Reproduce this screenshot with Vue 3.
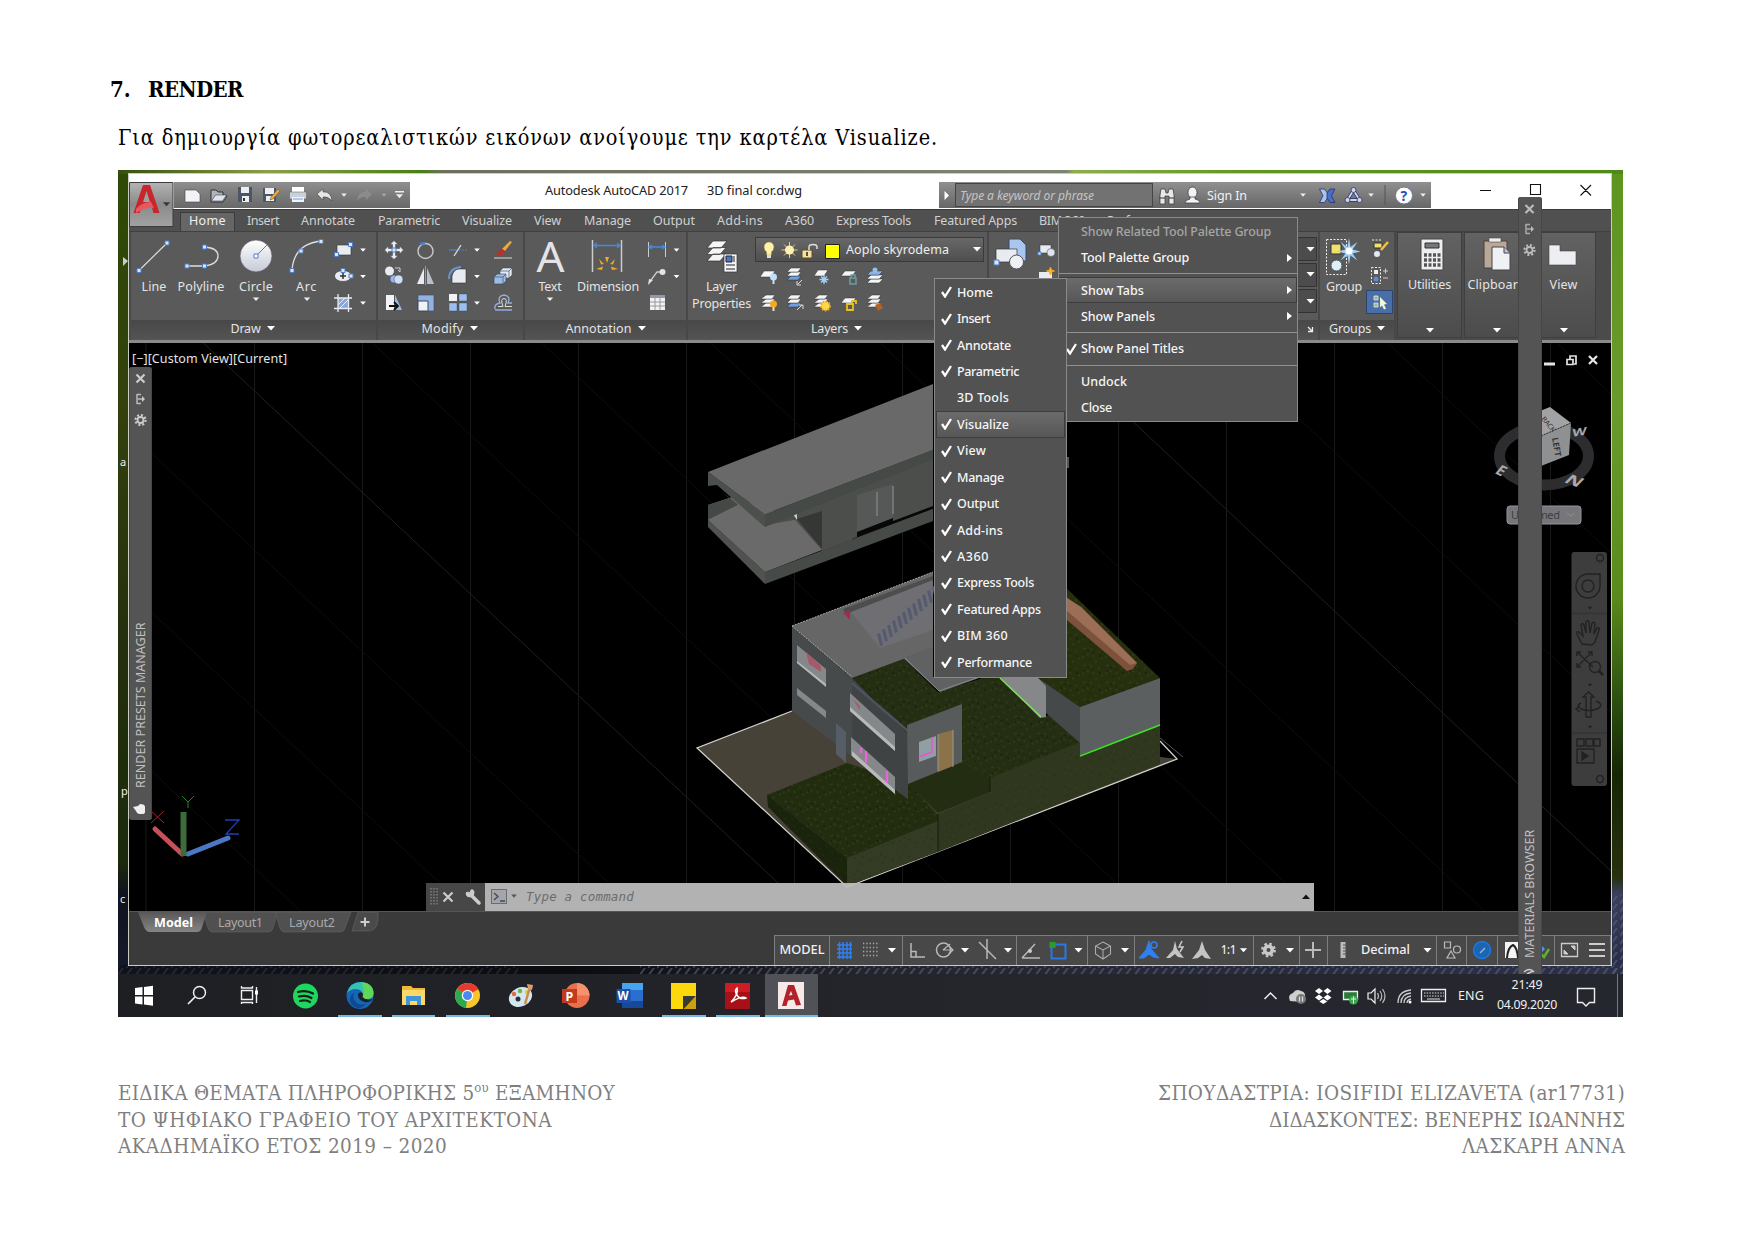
<script setup>
// Spreads the glyphs of a label so it occupies exactly the given width
const vFit = {
  mounted(el, { value }) {
    const w = el.getBoundingClientRect().width
    const n = el.textContent.length
    el.style.letterSpacing = (value - w) / n + 'px'
  },
}

const dn = (x, y, s = 1) => `M${x - 4 * s} ${y - 2 * s}h${8 * s}l${-4 * s} ${4.6 * s}z`

// label, left offset from previous tab end, text width
const tabs = [
  ['Home', 9, 37], ['Insert', 21, 32], ['Annotate', 22, 54], ['Parametric', 23, 62],
  ['Visualize', 22, 50], ['View', 22, 27], ['Manage', 23, 47], ['Output', 22, 42],
  ['Add-ins', 22, 46], ['A360', 22, 29], ['Express Tools', 22, 75], ['Featured Apps', 23, 83],
  ['BIM 360', 22, 46], ['Performance', 22, 72],
]

const tabMenu = [
  ['Home', 1, 36], ['Insert', 1, 33], ['Annotate', 1, 54], ['Parametric', 1, 62], ['3D Tools', 0, 52],
  ['Visualize', 1, 52], ['View', 1, 29], ['Manage', 1, 47], ['Output', 1, 42], ['Add-ins', 1, 46],
  ['A360', 1, 32], ['Express Tools', 1, 77], ['Featured Apps', 1, 84], ['BIM 360', 1, 51], ['Performance', 1, 75],
]

const gridX = [146, 254.5, 362.5, 470.5, 578.5, 686.5, 794.5, 902.5, 1010.5, 1118.5, 1226.5, 1334.5, 1442.5, 1550.5]
const diagonals = Array.from({ length: 15 }, (_, i) => ({ c: 788 - i * 159, bright: (i + 1) % 5 === 0 }))
const stairs = Array.from({ length: 12 }, (_, i) => ({ x: 877 + i * 5, y: 634 - i * 4.3 }))
const carets = [[363, 250], [363, 276.5], [363, 303]]
</script>

<template>
  <div class="page">
    <h1><span class="num">7.</span><span v-fit="95">RENDER</span></h1>
    <p class="lead"><span v-fit="820">Για δημιουργία φωτορεαλιστικών εικόνων ανοίγουμε την καρτέλα Visualize.</span></p>

    <div class="shot">
      <svg class="desk" viewBox="118 170 1505 804" width="1505" height="804">
        <defs>
          <linearGradient id="dl" x1="0" y1="0" x2="0" y2="1">
            <stop offset="0" stop-color="#2f4a06" /><stop offset=".3" stop-color="#33400d" />
            <stop offset=".6" stop-color="#232f0d" /><stop offset=".86" stop-color="#1c2a0c" />
            <stop offset=".9" stop-color="#10131f" /><stop offset="1" stop-color="#151a2b" />
          </linearGradient>
          <linearGradient id="dr" x1="0" y1="0" x2="0" y2="1">
            <stop offset="0" stop-color="#5e9420" /><stop offset=".3" stop-color="#6a9a2c" /><stop offset=".53" stop-color="#5b8a1c" />
            <stop offset=".66" stop-color="#2c5010" /><stop offset=".75" stop-color="#152605" /><stop offset=".88" stop-color="#27300f" />
            <stop offset=".9" stop-color="#3a405c" /><stop offset="1" stop-color="#262b45" />
          </linearGradient>
          <linearGradient id="dt" x1="0" x2="1">
            <stop offset="0" stop-color="#35500a" /><stop offset=".1" stop-color="#8aa04a" /><stop offset=".2" stop-color="#4a8012" />
            <stop offset=".215" stop-color="#6a705c" /><stop offset=".63" stop-color="#7e8474" /><stop offset=".635" stop-color="#8cae4c" />
            <stop offset=".75" stop-color="#5f9720" /><stop offset="1" stop-color="#4f8a18" />
          </linearGradient>
          <linearGradient id="db" x1="0" x2="1">
            <stop offset="0" stop-color="#11131c" /><stop offset=".3" stop-color="#0b0c10" /><stop offset=".5" stop-color="#23242d" />
            <stop offset="1" stop-color="#2c3049" />
          </linearGradient>
          <pattern id="hatch" width="9" height="8" patternUnits="userSpaceOnUse">
            <path d="M0 8 6 0" stroke="#5c6078" stroke-width="2" />
          </pattern>
        </defs>
        <rect x="118" y="170" width="12" height="804" fill="url(#dl)" />
        <rect x="1610" y="170" width="13" height="804" fill="url(#dr)" />
        <rect x="118" y="170" width="1505" height="4" fill="url(#dt)" />
        <rect x="118" y="965" width="1505" height="9" fill="url(#db)" />
        <rect x="118" y="966" width="400" height="8" fill="url(#hatch)" opacity=".25" />
        <rect x="640" y="966" width="983" height="8" fill="url(#hatch)" opacity=".6" />
        <rect x="1613" y="895" width="10" height="79" fill="url(#hatch)" opacity=".6" />
        <g fill="#eee" font-size="11" font-family="Noto Sans, sans-serif">
          <text x="120" y="466">a</text><text x="121" y="795">p</text><text x="120" y="903">c</text>
        </g>
        <path d="M123 257l5 4-5 5z" fill="#ccc" />
      </svg>

      <div class="window">
        <!-- title bar -->
        <div class="titlebar">
          <div class="quick">
            <svg viewBox="174 182 236 26" width="236" height="26">
              <path d="M185 190h11l4 4v8h-15z" fill="#f2f3f6" stroke="#444" stroke-width=".6" />
              <path d="M211 201v-11h5l2 2h5v3l4 1-4 6h-12z" fill="#aeb4bd" stroke="#333" /><path d="M211.500 201l4-6h11l-4 6z" fill="#dfe5ee" stroke="#444" stroke-width=".6" />
              <path d="M238 187h14v15h-14z" fill="#4c5666" /><path d="M241 187h8v6h-8zM242 196h7v6h-7z" fill="#eceff3" /><path d="M243 198h2v3h-2z" fill="#333" />
              <path d="M263 188h13v14h-13z" fill="#4c5666" /><path d="M265 188h9v6h-9zM266 196h8v5h-8z" fill="#eceff3" /><path d="M271 197l7-8 2 2-7 8-3 1z" fill="#e6ae45" stroke="#6a4415" stroke-width=".5" />
              <path d="M292 187h12v6h-12z" fill="#fff" /><path d="M289.500 192h17v7h-17z" fill="#c9d0da" stroke="#555" stroke-width=".5" /><path d="M292 197h12v5h-12z" fill="#eef4fb" /><path d="M293 199h10" stroke="#6b9ed6" />
              <path d="M317 194l6-5v3q8-1 9 9-4-5-9-4v3z" fill="#e6e6e6" stroke="#333" stroke-width=".5" />
              <path :d="dn(344, 195, .7)" fill="#eee" />
              <path d="M372 194l-6-5v3q-8-1-9 9 4-5 9-4v3z" fill="#8c8c8c" />
              <path :d="dn(384, 195, .6)" fill="#aaa" />
              <path d="M395 191h9v1.500h-9z" fill="#eee" /><path :d="dn(399.500, 196, .9)" fill="#eee" />
            </svg>
          </div>
          <div class="caption"><span v-fit="143">Autodesk AutoCAD 2017</span><span class="file" v-fit="95">3D final cor.dwg</span></div>
          <div class="info">
            <svg viewBox="939 182 16 26" width="16" height="26"><path d="M944.500 191v9l4.500-4.500z" fill="#fff" /></svg>
            <div class="search"><span v-fit="134">Type a keyword or phrase</span></div>
            <svg viewBox="1153 182 50 26" width="50" height="26">
              <path d="M1160 204v-9l1-6h4l1 4h2l1-4h4l1 6v9h-5v-8h-4v8z" fill="#e6e7ea" stroke="#333" stroke-width=".7" /><path d="M1159.500 198h5.500M1169 198h5" stroke="#333" stroke-width="1.200" />
              <ellipse cx="1192.500" cy="192.500" rx="4.500" ry="5.500" fill="#f1f3f7" stroke="#333" stroke-width=".7" /><path d="M1185 203q0-3 5-4v-2h5v2q5 1 5 4z" fill="#f1f3f7" stroke="#333" stroke-width=".7" />
            </svg>
            <span class="signin"><span v-fit="40">Sign In</span></span>
            <svg class="grow" viewBox="1290 182 141 26" width="141" height="26">
              <path :d="dn(1303, 195, .7)" fill="#eee" />
              <path d="M1319.500 189h5l3 4v5l-3 4.500h-5l3.500-6.700z" fill="#a9c3f0" stroke="#22346e" stroke-width=".8" /><path d="M1335 189h-5l-3 4v5l3 4.500h5l-3.500-6.700z" fill="#4a6ec4" stroke="#22346e" stroke-width=".8" />
              <path d="M1353.500 190l-6 10h12z" fill="none" stroke="#2b3566" stroke-width="3.400" stroke-linejoin="round" /><path d="M1353.500 190l-6 10h12z" fill="none" stroke="#cdd8f0" stroke-width="1.800" stroke-linejoin="round" />
              <g fill="#cdd8f0" stroke="#2b3566" stroke-width=".8"><circle cx="1353.500" cy="190" r="2.500" /><circle cx="1347.500" cy="200" r="2.500" /><circle cx="1359.500" cy="200" r="2.500" /></g>
              <path :d="dn(1371, 195, .7)" fill="#eee" />
              <path d="M1385 185v20" stroke="#555" />
              <circle cx="1404" cy="195.500" r="8.500" fill="#fff" stroke="#6c7a99" /><text x="1400.500" y="200.500" font-size="14" font-weight="700" fill="#2b4fb0">?</text>
              <path :d="dn(1423, 195, .7)" fill="#eee" />
            </svg>
          </div>
          <svg class="wbtn" viewBox="1470 174 130 34" width="130" height="34">
            <path d="M1480 190.500h11M1530.500 184.500h10v10h-10zM1580.500 185l10.500 10.500M1591 185l-10.500 10.500" fill="none" stroke="#111" stroke-width="1.100" />
          </svg>
        </div>

        <!-- ribbon tabs -->
        <div class="tabs">
          <span v-for="t in tabs" :key="t[0]" class="tab" :style="{ marginLeft: t[1] + 'px' }" :class="{ active: t[0] === 'Home' }"><span v-fit="t[2]">{{ t[0] }}</span></span>
        </div>

        <!-- ribbon -->
        <div class="ribbon">
          <section class="panel" style="width: 247px">
            <div class="tools">
              <div class="tool">
                <svg viewBox="131 237 46 40" width="46" height="40"><path d="M139 270.500 167 243" stroke="#ddd" stroke-width="1.200" /><path d="M137 268.500h4v4h-4zM165 241h4v4h-4z" class="node" /></svg>
                <b v-fit="25">Line</b>
              </div>
              <div class="tool">
                <svg viewBox="177 237 48 40" width="48" height="40"><path d="M187 266h18q13-2 13-10t-13-9" fill="none" stroke="#ddd" stroke-width="1.300" /><path d="M185 264h4v4h-4zM202.500 264h4v4h-4zM202.500 245h4v4h-4z" class="node" /></svg>
                <b v-fit="47">Polyline</b>
              </div>
              <div class="tool">
                <svg viewBox="225 237 62 40" width="62" height="40">
                  <defs><linearGradient id="cg" x1="0" y1="0" x2="0" y2="1"><stop offset="0" stop-color="#fff" /><stop offset="1" stop-color="#c4c9d6" /></linearGradient></defs>
                  <circle cx="256" cy="256" r="16" fill="url(#cg)" stroke="#444" stroke-width=".6" /><path d="M256 256l11-11" stroke="#4c7fc8" /><path d="M254 254h4v4h-4z" fill="#fff" stroke="#4c7fc8" />
                </svg>
                <b v-fit="34">Circle</b>
                <svg viewBox="0 0 12 8" width="12" height="8"><path :d="dn(6, 3, .8)" fill="#eee" /></svg>
              </div>
              <div class="tool">
                <svg viewBox="287 237 39 40" width="39" height="40"><path d="M292 270q2-26 29-29" fill="none" stroke="#ddd" stroke-width="1.300" /><path d="M290 268.500h4v4h-4zM299 249h4v4h-4zM319 239.500h4v4h-4z" class="node" /></svg>
                <b v-fit="21">Arc</b>
                <svg viewBox="0 0 12 8" width="12" height="8"><path :d="dn(6, 3, .8)" fill="#eee" /></svg>
              </div>
              <svg viewBox="326 237 50 80" width="50" height="80">
                <path v-for="c in carets" :key="c[1]" :d="dn(c[0], c[1], .7)" fill="#fff" />
                <path d="M337 245h14v10h-14z" fill="#e8ebf1" stroke="#333" stroke-width=".6" /><path d="M334.500 252.500h4v4h-4zM348.500 242.500h4v4h-4z" class="node" />
                <ellipse cx="343" cy="276" rx="8.500" ry="5.500" fill="#e8ebf1" stroke="#333" stroke-width=".6" /><path d="M340 276h6M343 273v6" stroke="#333" stroke-width="1.500" /><path d="M341 268.500h4v4h-4zM349 274h4v4h-4z" class="node" />
                <path d="M338 298h11v11h-11z" fill="#8aa7d8" /><path d="M338 305l7-7M339 309l10-10" stroke="#e8eefb" /><path d="M334 298h18M334 308.500h18M338 294v18M348.500 294v18" stroke="#e8ebf1" stroke-width="1.300" />
              </svg>
            </div>
            <footer><span v-fit="30">Draw</span><svg viewBox="0 0 12 8" width="12" height="8"><path :d="dn(6, 3)" fill="#fff" /></svg></footer>
          </section>

          <section class="panel" style="width: 147px">
            <div class="tools">
              <svg viewBox="378 237 145 80" width="145" height="80">
                <path d="M394 240.500l4 4h-2.500v4h4v-2.500l4 4-4 4v-2.500h-4v4h2.500l-4 4-4-4h2.500v-4h-4v2.500l-4-4 4-4v2.500h4v-4h-2.500z" fill="#e8ebf1" stroke="#3c3c3c" stroke-width=".5" /><path d="M392 248h4v4h-4z" class="node" />
                <circle cx="425.500" cy="251" r="7.500" fill="none" stroke="#c8c8c8" stroke-width="1.400" /><path d="M420 244l5-1" stroke="#4c7fc8" stroke-width="2.500" />
                <path d="M449 250h8" stroke="#4c7fc8" stroke-width="1.500" /><path d="M454 256l7-11" stroke="#ddd" stroke-width="1.300" /><path d="M459 250h8" stroke="#4c7fc8" stroke-dasharray="2 1" />
                <path d="M502 249l8-8 2 1-7 9z" fill="#f4a83a" /><path d="M496 256q2-7 6-7l3 2q-2 6-9 5z" fill="#b5322b" /><path d="M494 258h18" stroke="#ddd" />
                <circle cx="389.500" cy="271" r="4.500" fill="#e8ebf1" /><circle cx="394" cy="279" r="4" fill="#9ab8e8" stroke="#346" stroke-width=".5" /><circle cx="398.500" cy="279.500" r="4.500" fill="#cfe0f6" stroke="#346" stroke-width=".5" /><path d="M395 268h5v4l-2-2" fill="none" stroke="#ccc" />
                <path d="M424 268v16h-7z" fill="#e8ebf1" /><path d="M427 268v16h7z" fill="#b9c0cb" /><path d="M425.500 266v19" stroke="#999" />
                <path d="M452 283v-7q2-7 7-7h7v14z" fill="#e8ebf1" stroke="#333" stroke-width=".6" /><path d="M449 279q0-11 12-12" fill="none" stroke="#6a94d0" stroke-width="2" />
                <path d="M500 271l3-3h9v7l-3 3h-9z" fill="#e4ebf6" stroke="#456" stroke-width=".6" /><path d="M494 277l3-3h9v7l-3 3h-9z" fill="#9bbbe8" stroke="#345" stroke-width=".6" /><path d="M494 277h9v7M503 277l3-3M500 271h9l3-3M509 271v7" fill="none" stroke="#456" stroke-width=".7" />
                <path d="M386 295h8v15h-8z" fill="#f0f2f6" /><path d="M395 295l7 15h-7z" fill="#9cbce6" /><path d="M389 306h8M394 302l4 4-4 4" stroke="#111" stroke-width="1.800" fill="none" />
                <path d="M418 295h16v16h-16z" fill="#8fb2e0" stroke="#3a4a60" stroke-width=".6" /><path d="M418 301h10v10h-10z" fill="#f0f2f6" stroke="#3a4a60" />
                <path d="M449 294h8v7h-8z" fill="#f0f2f6" /><path d="M459 294h8v7h-8zM449 303h8v8h-8zM459 303h8v8h-8z" fill="#9cc0ee" stroke="#345" stroke-width=".4" />
                <path d="M495 309q-1-5 5-6-3-7 4-8 7 1 4 8h4M495 310h17" fill="none" stroke="#93aed6" stroke-width="1.400" /><path d="M498 306.500h5q-3-8 1-8 4 0 1 8h7" fill="none" stroke="#ddd" />
                <path :d="dn(477, 250, .7)" fill="#fff" /><path :d="dn(477, 276.500, .7)" fill="#fff" /><path :d="dn(477, 303, .7)" fill="#fff" />
              </svg>
            </div>
            <footer><span v-fit="42">Modify</span><svg viewBox="0 0 12 8" width="12" height="8"><path :d="dn(6, 3)" fill="#fff" /></svg></footer>
          </section>

          <section class="panel" style="width: 163px">
            <div class="tools">
              <div class="tool">
                <svg viewBox="525 237 50 40" width="50" height="40"><text x="536.500" y="271.500" font-size="41" textLength="28" lengthAdjust="spacingAndGlyphs" fill="#e4e4e6" font-family="Noto Sans, sans-serif">A</text></svg>
                <b v-fit="23">Text</b>
                <svg viewBox="0 0 12 8" width="12" height="8"><path :d="dn(6, 3, .8)" fill="#eee" /></svg>
              </div>
              <div class="tool">
                <svg viewBox="575 237 66 40" width="66" height="40">
                  <path d="M592.500 240v32M621.500 240v32" stroke="#ccc" stroke-width="1.500" /><path d="M594 245.500h26M597 243l-3 2.500 3 2.500M617 243l3 2.500-3 2.500" stroke="#3f8be8" stroke-width="1.300" fill="none" />
                  <g fill="#f5a81e"><path d="M605 257h4l-2 6zM599 259l5 5-3 .5zM615 259l-5 5 3 .5zM596 269l7-2.500-1 3.500zM618 269l-7-2.500 1 3.500z" /></g>
                </svg>
                <b v-fit="62">Dimension</b>
              </div>
              <svg viewBox="641 237 44 80" width="44" height="80">
                <path d="M648.500 242v15M665.500 242v15" stroke="#ccc" /><path d="M650 247h14M652 245l-3 2 3 2M662 245l3 2-3 2" stroke="#3f8be8" stroke-width="1.300" fill="none" />
                <path d="M651 280l6-8h5" fill="none" stroke="#ccc" stroke-width="1.300" /><circle cx="662.500" cy="272" r="3" fill="#e4e4e6" /><path d="M648 285l5-5-4-1z" fill="#e4e4e6" />
                <path d="M650 295h15v15h-15z" fill="#f0f1f4" /><path d="M650 295h15v3h-15z" fill="#8f99a8" /><path d="M655 298v12M660 298v12M650 302h15M650 306h15" stroke="#888" stroke-width=".8" />
                <path :d="dn(676.500, 250, .7)" fill="#fff" /><path :d="dn(676.500, 276.500, .7)" fill="#fff" />
              </svg>
            </div>
            <footer style="padding-left: 2px"><span v-fit="66">Annotation</span><svg viewBox="0 0 12 8" width="12" height="8"><path :d="dn(6, 3)" fill="#fff" /></svg></footer>
          </section>

          <section class="panel" style="width: 301px">
            <div class="tools">
              <div class="tool wide">
                <svg viewBox="688 237 67 40" width="67" height="40">
                  <g fill="#f4f5f7" stroke="#333" stroke-width=".7"><path d="M713 254h13l-6 7h-13zM713 247.500h13l-6 7h-13zM713 241h14l-6 7h-14z" /><path d="M724 254h13v18h-13z" /></g>
                  <path d="M726 256h6v6h-6z" fill="#4a78c0" stroke="#223" /><path d="M726 265h9M726 269h9M734 256v6" stroke="#222" />
                </svg>
                <b v-fit="31">Layer</b><b v-fit="59">Properties</b>
              </div>
              <div class="layers">
                <div class="combo">
                  <svg viewBox="756 238 86 22" width="86" height="22">
                    <path d="M769 241a5 5 0 0 1 5 5q0 3-2.500 5v3h-5v-3q-2.500-2-2.500-5a5 5 0 0 1 5-5z" fill="#fff1a8" stroke="#8a7a4a" stroke-width=".5" /><path d="M767 254h4v3h-4z" fill="#ddd" />
                    <path d="M789.500 241v16M781.500 249h16M784 243.500l11 11M795 243.500l-11 11" stroke="#e8c987" /><circle cx="789.500" cy="249" r="4.500" fill="#fff0b0" />
                    <path d="M802 249h10v8h-10z" fill="#f7e3a0" stroke="#5a4a2a" /><path d="M809 249v-3q0-2.500 4-2.500t4 2.500v2" stroke="#ddd" stroke-width="1.500" fill="none" /><path d="M807 251v4" stroke="#222" stroke-width="1.500" />
                    <path d="M825.500 243.500h14v14h-14z" fill="#ff0" stroke="#222" />
                  </svg>
                  <span v-fit="103">Aoplo skyrodema</span>
                  <svg class="end" viewBox="0 0 12 8" width="12" height="8"><path :d="dn(6, 3)" fill="#fff" /></svg>
                </div>
                <svg viewBox="755 263 150 54" width="150" height="54">
                  <g fill="#f4f5f7" stroke="#333" stroke-width=".5">
                    <path d="M764 271h11l-4 6h-11z" /><path d="M791 276h10l-3 4h-11z" fill="#6f9fe0" /><path d="M791 272h10l-3 4h-11z" /><path d="M791 268h10l-3 4h-11z" /><path d="M818 270h10l-4 6h-10z" /><path d="M845 271h11l-4 5h-11z" />
                    <path d="M871 279h12l-4 4h-12z" /><path d="M871 275h12l-4 4h-12z" /><path d="M871 271h12l-4 4h-12z" fill="#8fb2e0" />
                    <path d="M766 303h9l-3 4h-11z" /><path d="M766 299h9l-3 4h-11z" /><path d="M766 295h9l-3 4h-11z" />
                    <path d="M791 303h10l-3 4h-11z" fill="#6f9fe0" /><path d="M791 299h10l-3 4h-11z" /><path d="M791 295h10l-3 4h-11z" />
                    <path d="M819 303h9l-3 4h-11z" /><path d="M819 299h9l-3 4h-11z" /><path d="M819 295h9l-3 4h-11z" />
                    <path d="M845 298h11l-4 5h-11z" />
                    <path d="M872 303h9l-3 4h-11z" /><path d="M872 299h9l-3 4h-11z" /><path d="M872 295h9l-3 4h-11z" />
                  </g>
                  <circle cx="773.500" cy="277" r="3.500" fill="#bfe0f7" /><circle cx="875" cy="270" r="2.500" fill="#8fc0e8" />
                  <path d="M773.500 280v4" stroke="#cde" stroke-width="2" />
                  <path d="M824 275v9M819.500 279.500h9M821 276.500l6 6M827 276.500l-6 6" stroke="#9fd0f5" stroke-width="1.400" />
                  <path d="M850 278h6v6h-6zM851 278v-3h4v3" fill="none" stroke="#6f9f9f" stroke-width="1.500" />
                  <path d="M802 280l-4 4M797 281v4h4M797 310l5-5M803 309v-4h-4" stroke="#ddd" fill="none" />
                  <circle cx="773.500" cy="304" r="3.500" fill="#f8a820" /><path d="M773.500 307v4" stroke="#f4e0b0" stroke-width="2" />
                  <circle cx="825.500" cy="306" r="4.500" fill="#ffd848" stroke="#f0a020" stroke-dasharray="1.500 1.500" stroke-width="2" />
                  <path d="M847 304h6v6h-6zM852 304v-3h4v3" fill="none" stroke="#e8c020" stroke-width="1.800" />
                  <path d="M875 305l5-2 3 5-5 3z" fill="#b4622a" />
                </svg>
              </div>
            </div>
            <footer><span v-fit="37">Layers</span><svg viewBox="0 0 12 8" width="12" height="8"><path :d="dn(6, 3)" fill="#fff" /></svg></footer>
          </section>

          <section class="panel" style="width: 331px">
            <div class="tools">
              <svg viewBox="989 237 329 80" width="329" height="80">
                <path d="M1009 239h11l6 6v16h-17z" fill="#a9c6ee" stroke="#3a4a60" /><path d="M996 249h21v13h-21z" fill="#e8ebf1" stroke="#333" stroke-width=".7" /><circle cx="1016.500" cy="262" r="7" fill="#eef0f4" stroke="#555" /><path d="M994 260h5v5h-5z" class="node" />
                <path d="M1040 245h11v8h-11z" fill="#e8ebf1" stroke="#333" stroke-width=".5" /><circle cx="1051" cy="252.500" r="4" fill="#dfe4ee" stroke="#555" stroke-width=".6" /><path d="M1038 252h3v3h-3z" class="node" />
                <path d="M1039 272h13v6h-13z" fill="#e8ebf1" /><path d="M1050.500 267l1 3 3 1-3 1-1 3-1-3-3-1 3-1z" fill="#f5b82e" stroke="#f5a81e" />
                <g fill="#4c4c4c" stroke="#333"><path d="M1200 237.500h116.500v23h-116.500zM1200 263.500h116.500v23h-116.500zM1200 289.500h116.500v23h-116.500z" /></g>
                <path :d="dn(1310.500, 249)" fill="#fff" /><path :d="dn(1310.500, 274)" fill="#fff" /><path :d="dn(1310.500, 301)" fill="#fff" />
              </svg>
            </div>
            <footer class="right"><svg viewBox="0 0 10 10" width="10" height="10"><path d="M3 3l4 4M7.500 3v4.500h-4.500" stroke="#eee" stroke-width="1.300" fill="none" /></svg></footer>
          </section>

          <section class="panel" style="width: 76px">
            <div class="tools">
              <div class="tool" style="padding-left: 3px">
                <svg viewBox="1323 237 42 40" width="42" height="40">
                  <path d="M1326.500 239.500h20v35h-20z" fill="none" stroke="#eee" stroke-dasharray="2 1.500" /><path d="M1331 244h10v10h-10z" fill="#f0e070" stroke="#333" /><circle cx="1336.500" cy="265.500" r="5.500" fill="#dff0f4" stroke="#456" />
                  <path d="M1349 238l1.500 9 7-5-5 7.500 8 2-8 2 5 7-7-5-1.500 9-1.500-9-7 5 5-7-8-2 8-2-5-7.500 7 5z" fill="#9cd0f8" /><circle cx="1349" cy="251" r="3.500" fill="#fff" />
                </svg>
                <b v-fit="36">Group</b>
              </div>
              <svg viewBox="1365 237 30 80" width="30" height="80">
                <path d="M1374 243h8v5h-8z" fill="#f0e070" stroke="#333" /><path d="M1372 240h10" stroke="#eee" stroke-dasharray="2 1.500" /><circle cx="1377" cy="254" r="3" fill="#e4e8ef" /><path d="M1381 250l7-8" stroke="#f0c040" stroke-width="2.500" />
                <path d="M1371.500 267.500h9v16h-9z" fill="none" stroke="#eee" stroke-dasharray="2 1.500" /><path d="M1374 270h4v4h-4z" fill="#eee" /><circle cx="1376" cy="279" r="2.500" fill="#5a8ad8" /><path d="M1383 271h5M1385.500 268.500v5M1383 278h5" stroke="#ccc" />
                <path d="M1366.500 290.500h26v23h-26z" fill="#4a6ea8" stroke="#2b4570" /><path d="M1374 296h4v4h-4zM1374 303h4v4h-4z" fill="#9ab89a" stroke="#dfe8ef" stroke-width=".8" /><path d="M1380 297l7 7-3 .5 2 4-2 1-2-4-2 2z" fill="#f4f8d0" />
              </svg>
            </div>
            <footer style="padding-left: 2px"><span v-fit="42">Groups</span><svg viewBox="0 0 12 8" width="12" height="8"><path :d="dn(6, 3)" fill="#fff" /></svg></footer>
          </section>

          <section class="solo">
            <svg viewBox="1396 235 64 42" width="64" height="42"><path d="M1419 239h22v31h-22z" fill="#eceef1" stroke="#444" /><path d="M1423 243h14v5h-14z" fill="#777" stroke="#333" /><path d="M1422 255h17M1422 260h17M1422 265h17" stroke="#555" stroke-width="3.500" stroke-dasharray="3 1.500" /></svg>
            <b v-fit="43">Utilities</b><svg class="dnb" viewBox="0 0 12 8" width="12" height="8"><path :d="dn(6, 3)" fill="#fff" /></svg>
          </section>
          <section class="solo">
            <svg viewBox="1465 235 64 42" width="64" height="42"><path d="M1484 241h23v27h-23z" fill="#b9a797" stroke="#4a4038" /><path d="M1489 238h12v4h-12z" fill="#eee" stroke="#444" stroke-width=".6" /><path d="M1492 247h12l6 6v17h-18z" fill="#f0f1f5" stroke="#444" /><path d="M1504 247v6h6" fill="#b9c6de" stroke="#444" /></svg>
            <b v-fit="58">Clipboard</b><svg class="dnb" viewBox="0 0 12 8" width="12" height="8"><path :d="dn(6, 3)" fill="#fff" /></svg>
          </section>
          <section class="solo">
            <svg viewBox="1533 235 63 42" width="63" height="42"><path d="M1550 245h11v6h16v14h-27z" fill="#eceef2" stroke="#444" stroke-width=".6" /></svg>
            <b v-fit="28">View</b><svg class="dnb" viewBox="0 0 12 8" width="12" height="8"><path :d="dn(6, 3)" fill="#fff" /></svg>
          </section>
        </div>

        <!-- model space -->
        <svg class="canvas" viewBox="129 343 1482 568" width="1482" height="568">
          <defs>
            <pattern id="grass" width="23" height="17" patternUnits="userSpaceOnUse">
              <path d="M2 3l3-1M9 2l2 2M5 8l3 1M12 9l1 2M1 11l2-1M17 5l2 1M20 13l2-1M14 15l2 1" stroke="#34401a" stroke-width="1.600" opacity=".6" /><path d="M6 4l2 1M11 7l2-1M3 7l1 2M18 9l2 2M8 14l2-1" stroke="#171f0a" stroke-width="1.800" opacity=".6" />
            </pattern>
          </defs>
          <path v-for="x in gridX" :key="x" :d="`M${x} 343v568`" stroke="#19191b" />
          <path v-for="d in diagonals" :key="d.c" :d="`M129 ${d.c + 121}L1611 ${d.c + 1514}`" :stroke="d.bright ? '#1f1f21' : '#0d0d0e'" />

          <!-- lifted upper floor -->
          <path d="M708 505l24-8 75 25 15 27-57 23-57-52z" fill="#6b6b6b" />
          <path d="M708 505l22-7 8 7-30 15z" fill="#454945" />
          <path d="M722 492l43 34 168-68v52l-111 41-27-31-30 5-35-26z" fill="#4b4e4b" />
          <path d="M738 505l27 21 30-6 27 30-57 22-57-52z" fill="#6a6a6a" />
          <path d="M797 519l25-8v38z" fill="#343734" /><path d="M793 514l4-1v7z" fill="#ccc" />
          <path d="M857 495l36-11v36l-36 14z" fill="#555857" /><path d="M877 492v24M893 486v28" stroke="#7d8082" stroke-width="1.500" />
          <path d="M852 539l5-2v-5l36-14v3l40-15v3l-81 31z" fill="#080808" />
          <path d="M765 572l168-63v12l-168 63z" fill="#474b48" /><path d="M708 520l57 52v12l-57-57z" fill="#4f524f" />
          <path d="M708 472v14l9-1 48 42v-13z" fill="#4c504c" />
          <path d="M765 514l168-64v9l-168 68z" fill="#464a46" />
          <path d="M708 472l225-88v66l-168 64z" fill="#696969" />
          <path d="M1066 457h3v11h-3z" fill="#555" />

          <!-- plot -->
          <path d="M697 748l95-37 385 48-330 127z" fill="#474238" />
          <path d="M1160 741l17 18-330 128-150-139 95-37" fill="none" stroke="#d0d0cc" stroke-width="1.300" /><path d="M1160 738l23 19" stroke="#555" />
          <path d="M767 795l80-32 61 20 30 32v8l-91 35z" fill="#222d10" /><path d="M767 795l80 63v28l-79-79z" fill="#1a230c" />
          <path d="M847 858l91-37v31l-91 34z" fill="#343b25" />
          <path d="M908 784l54-22 28 16v14l-52 21z" fill="#232d12" />
          <path d="M938 814l52-22v-15l90-36 80-16v39l-222 88z" fill="#30371f" />
          <path d="M852 678l51-20 35 34 64-20 44 44 14-6 20 32-90 36-28-16-54 22v-50z" fill="#242e12" />
          <!-- right wing -->
          <path d="M1060 582l100 96-80 29-43-30z" fill="#26300f" />
          <path d="M767 795l80-32 61 20 30 32-91 43zM852 678l51-20 35 34 64-20 44 44 14-6 20 32-90 36-28-16-54 22v-50zM1060 582l100 96-80 29-43-30z" fill="url(#grass)" />
          <path d="M847 858l91-37 52-29 90-50 80-16v39l-222 88-91 33zM767 795l80 63v28l-79-79z" fill="url(#grass)" opacity=".35" />
          <path d="M938 814v37M990 777v15" stroke="#161d0b" />
          <path d="M1067 598l14 9 56 56-4 6-6 2-60-51z" fill="#7c523c" /><path d="M1067 598l14 9 56 56-7 2-63-54z" fill="#9c6e55" />
          <path d="M1080 707l80-29v47l-80 30z" fill="#5c5f60" /><path d="M1037 677l43 30v36l-34-30z" fill="#464949" />
          <path d="M1080 756l80-31" stroke="#3fe026" stroke-width="1.600" />
          <path d="M1000 677h37l9 9v31l-6 1z" fill="#858789" /><path d="M1000 678l41 39" stroke="#7fe060" stroke-width="1.500" />
          <!-- main volume -->
          <path d="M792 626l141-54v76l-81 30z" fill="#666" />
          <path d="M850 611l83-31v50l-53 18z" fill="#6f6f73" /><path d="M846 614l87-34v-4l-90 33z" fill="#4c4e4e" /><path d="M843 613l7-3v10z" fill="#a32a4c" />
          <g fill="#555a70"><path v-for="s in stairs" :key="s.x" :d="`M${s.x} ${s.y}l3-1 3 12-3 1z`" /></g>
          <path d="M903 658l30-11v30l49 0-42 15z" fill="#5f6163" /><path d="M905 658l34 33 43-15" fill="none" stroke="#8a8a8a" />
          <path d="M792 626l60 52 56 57v64l-116-88z" fill="#464a4b" /><path d="M852 678l56 57v64l-56-42z" fill="#3f4344" />
          <path d="M792 626l60 51M792 626l141-54" stroke="#aaa" stroke-dasharray="2 1" />
          <path d="M852 683l57 49" stroke="#4c5260" stroke-width="2.500" />
          <g fill="#85888a"><path d="M797 645l29 24v17l-29-23zM797 688l29 23v7l-29-23zM850 693l45 41v17l-45-40zM851 737l44 40v17l-44-39z" /></g>
          <path d="M806 652l15 14v6l-12-8zM852 698l8 8v4z" fill="#a55a6a" /><path d="M850 707l45 40v4l-45-40zM852 751l43 39v4l-43-38zM797 661l29 23v3l-29-24z" fill="#b8baba" />
          <path d="M866 751v12M887 771v12M861 748v5" stroke="#f060dc" stroke-width="2.200" />
          <path d="M836 723l10 9v31l-10-9z" fill="#565d66" />
          <path d="M907 725l55-21v58l-54 22z" fill="#585b5c" />
          <path d="M919 742l17-6v20l-17 6z" fill="#8f9fa4" /><path d="M919 757l13-5v-15" fill="none" stroke="#f050d0" stroke-width="1.500" />
          <path d="M938 734l15-4v36l-15 6z" fill="#8c7248" /><path d="M953 730v37M938 734v37" stroke="#999" />

          <!-- axes -->
          <g stroke-linecap="round" fill="none"><path d="M155 829l27 25" stroke="#c8505a" stroke-width="5" /><path d="M188 854l40-16" stroke="#4a78c4" stroke-width="5" /><path d="M183.500 812v44" stroke="#3d6b3a" stroke-width="6" stroke-linecap="butt" /></g>
          <path d="M151 811l13 12M164 811l-13 12" stroke="#a82028" /><path d="M182 796l6 6 6-6M188 802v6" stroke="#1e8a28" fill="none" /><path d="M225 820h14l-13 14h13" stroke="#1d3fb8" fill="none" stroke-width="1.300" />

          <text x="132" y="362.500" class="vp" textLength="155">[−][Custom View][Current]</text>
          <path d="M1544 364h11" stroke="#e4e4e4" stroke-width="3" /><path d="M1570 359v-3h6v8h-2M1567 359.500h6v5h-6z" stroke="#e4e4e4" stroke-width="1.700" fill="none" /><path d="M1589 356l8 8M1597 356l-8 8" stroke="#e4e4e4" stroke-width="2.300" />

          <!-- view cube -->
          <ellipse cx="1544" cy="456" rx="44.500" ry="29" fill="none" stroke="#2d2d30" stroke-width="11" />
          <path d="M1530 415l20-8 21 16-30 13-12-3z" fill="#a2a2a4" /><path d="M1541 436l30-13-2 32-28 11z" fill="#8f9092" /><path d="M1541 436l30-13" stroke="#333" stroke-dasharray="2 1" />
          <g font-family="Noto Sans, sans-serif" font-weight="700" fill="#a8a8aa"><text transform="translate(1494 473) rotate(25) skewX(-15)" font-size="15">E</text><text transform="translate(1563 482) rotate(20) skewX(-25) scale(1.100 .8)" font-size="18">N</text><text transform="translate(1572 437) rotate(-10) skewX(-15) scale(1 .7)" font-size="15">W</text></g>
          <text transform="translate(1552 438) rotate(80)" font-size="8.500" font-weight="700" fill="#333">LEFT</text><text transform="translate(1541 419) rotate(50)" font-size="7" fill="#333">BACK</text>
          <rect x="1507" y="506" width="74" height="18" rx="3" fill="#77777b" stroke="#94949a" /><text x="1511" y="519" font-size="11" fill="#3c3c3c" textLength="49">Unnamed</text><path d="M1567 513l4 3 4-3" stroke="#8e8e92" fill="none" />

          <!-- navigation bar -->
          <rect x="1571.500" y="552" width="35.500" height="234" rx="3" fill="#3d3d3d" />
          <g fill="none" stroke="#222" stroke-width="1.400">
            <path d="M1588 574h12v12a12 12 0 1 1-12-12z" /><circle cx="1588" cy="586" r="6" /><path d="M1572 613.500h35M1572 733h35" stroke="#353535" />
            <path d="M1582 644l-5-10q-1-3 2-2l4 4-2-11q1-3 3 0l2 8v-11q2-3 3 0l1 11 2-10q2-2 3 1l-1 10 3-6q3-1 2 2l-4 12-3 3z" />
            <path d="M1577 652l16 15M1577 667l15-15M1577 656v-4h4M1588 652h4v4M1577 663v4h4" /><circle cx="1595" cy="667" r="5.500" /><path d="M1599 671l4 4" stroke-width="2.500" />
            <path d="M1586 717v-20h-3l5.500-5 5.500 5h-3v20z" /><path d="M1581 703q-6 3 0 6 8 3 16 0 8-4-1-8M1580 712l-4-3 4-3" />
            <path d="M1577 739h7v7h-7zM1586 739h7v7h-7zM1594 739h6v7h-6zM1577 749h17v14h-17z" /><path d="M1582 752v8l6-4z" fill="#222" /><circle cx="1600" cy="558" r="3.500" /><circle cx="1600" cy="779" r="3.500" />
          </g>
          <g fill="#222"><path :d="dn(1590, 608, .6)" /><path :d="dn(1590, 685, .6)" /><path :d="dn(1590, 727, .6)" /></g>
        </svg>

        <!-- layout tabs + status bar -->
        <div class="bottom">
          <svg class="ltabs" viewBox="129 911 260 23" width="260" height="23">
            <defs><linearGradient id="lt" x1="0" y1="0" x2="0" y2="1"><stop offset="0" stop-color="#585858" /><stop offset="1" stop-color="#858585" /></linearGradient></defs>
            <path d="M203 911h75l-5 16q-1 4-5 4h-55q-4 0-5-4z" fill="#505050" stroke="#666" stroke-width=".6" /><path d="M275 911h76l-6 16q-1 4-5 4h-55q-4 0-5-4z" fill="#505050" stroke="#666" stroke-width=".6" />
            <path d="M358 911h20v8q-1 11-10 11h-16z" fill="#4a4a4a" stroke="#666" stroke-width=".6" />
            <path d="M138 911h69l-5 15q-1 5-5 5h-47q-4 0-6-5z" fill="url(#lt)" />
            <g font-size="12.500"><text x="154" y="925.500" fill="#fff" font-weight="700" textLength="39" lengthAdjust="spacingAndGlyphs">Model</text><text x="218" y="925.500" fill="#aaa" textLength="45">Layout1</text><text x="289" y="925.500" fill="#aaa" textLength="46">Layout2</text></g>
            <path d="M360.500 921h9M365 916.500v9" stroke="#ccc" stroke-width="2" />
          </svg>
          <div class="status">
            <svg viewBox="774 934 56 30" width="56" height="30"><text x="779.500" y="953" textLength="45" lengthAdjust="spacingAndGlyphs" class="st">MODEL</text></svg>
            <svg viewBox="830 934 73 30" width="73" height="30">
              <path d="M837 944h15M837 948h15M837 952h15M837 956h15M839.500 941v17M843 941v17M847 941v17M850.500 941v17" stroke="#2f80f0" stroke-width="1.500" />
              <path d="M863 942.500h15M863 946.500h15M863 950.500h15M863 954.500h15" stroke="#aaa" stroke-width="1.300" stroke-dasharray="1.300 2" /><path :d="dn(892, 949)" fill="#fff" />
            </svg>
            <svg viewBox="903 934 114 30" width="114" height="30">
              <g fill="none" stroke="#b8b8b8" stroke-width="1.500"><path d="M911 942v14h14M911 950.500h5v5" /><circle cx="943.500" cy="949" r="7" /><path d="M943 949h10M949 945l4 4-4 4M943 949l7-6" stroke-width="1.200" /><path d="M979 941l17 17M987 938v20" /></g>
              <path :d="dn(965, 949)" fill="#fff" /><path :d="dn(1008, 949)" fill="#fff" />
            </svg>
            <svg viewBox="1017 934 71 30" width="71" height="30">
              <path d="M1022 957h18M1022 957l13-14" stroke="#b8b8b8" stroke-width="1.500" fill="none" /><circle cx="1030" cy="950" r="2" fill="#ccc" />
              <path d="M1051.500 943.500h14v14h-14z" stroke="#2878e8" stroke-width="2" fill="none" /><rect x="1049.500" y="941" width="6" height="6" fill="#2a9b30" /><path :d="dn(1078.500, 949)" fill="#fff" />
            </svg>
            <svg viewBox="1088 934 47 30" width="47" height="30"><path d="M1103 941l7.500 4v8l-7.500 5-7.500-5v-8zM1095.500 945l7.500 4 7.500-4M1103 949v9" fill="none" stroke="#aaa" stroke-width="1.100" /><path :d="dn(1125, 949)" fill="#fff" /></svg>
            <svg viewBox="1135 934 119 30" width="119" height="30">
              <path d="M1149 940l2 8 8 9-6-1-4-3-5 4-5 0 7-8z" fill="#2f80f0" stroke="#2f80f0" /><circle cx="1154" cy="944" r="3" fill="none" stroke="#2f80f0" stroke-width="1.500" />
              <path d="M1175 940l2 8 7 9-6-1-3-3-5 4-4 0 7-8zM1202 940l3 9 6 9-6-1-3-3-4 3-6 1 7-9z" fill="#c4c4c4" /><path d="M1182 940l-3 6h4l-3 5" stroke="#ccc" stroke-width="1.500" fill="none" />
              <text x="1221" y="953" textLength="15" lengthAdjust="spacingAndGlyphs" class="st">1:1</text><path :d="dn(1243.500, 949, .9)" fill="#fff" />
            </svg>
            <svg viewBox="1254 934 46 30" width="46" height="30"><circle cx="1268.500" cy="949" r="3.800" fill="none" stroke="#c8c8c8" stroke-width="3.600" /><circle cx="1268.500" cy="949" r="6.300" fill="none" stroke="#c8c8c8" stroke-width="2.200" stroke-dasharray="2.500 2.450" /><path :d="dn(1290, 949)" fill="#fff" /></svg>
            <svg viewBox="1300 934 28 30" width="28" height="30"><path d="M1305 949h16M1313 941v16" stroke="#bbb" stroke-width="2" /></svg>
            <svg viewBox="1328 934 109 30" width="109" height="30"><path d="M1340.500 941h5v16h-5z" fill="#bbb" /><path d="M1343 944h3M1343 947h3M1343 950h3M1343 953h3" stroke="#555" /><text x="1361" y="953" textLength="49" lengthAdjust="spacingAndGlyphs" class="st">Decimal</text><path :d="dn(1427.500, 949)" fill="#fff" /></svg>
            <svg viewBox="1437 934 30 30" width="30" height="30"><path d="M1444.500 941h6v6h-6zM1451 950l4 7h-8z" fill="none" stroke="#bbb" stroke-width="1.200" /><circle cx="1457" cy="948.500" r="3.500" fill="none" stroke="#bbb" stroke-width="1.200" /></svg>
            <svg viewBox="1467 934 31 30" width="31" height="30"><circle cx="1482" cy="949" r="8.500" fill="#1c64b4" stroke="#1f78dc" stroke-width="1.500" /><path d="M1480 952l5-5" stroke="#8bc" stroke-width="1.500" /></svg>
            <svg viewBox="1498 934 57 30" width="57" height="30"><path d="M1505 941h14v16h-14z" fill="#f4f4f4" /><path d="M1507 957q1-11 6-13 4 2 5 13" fill="none" stroke="#222" stroke-width="2" /><path d="M1541 944l4 4-3 3z" fill="#5b94e0" /><path d="M1541 953l3 3 5-8" stroke="#5fb030" stroke-width="2.500" fill="none" /></svg>
            <svg viewBox="1555 934 56 30" width="56" height="30"><path d="M1561.500 942.500h16v13h-16z" fill="none" stroke="#ccc" stroke-width="1.300" /><path d="M1575 945v4l-4-4zM1564 953v-4l4 4z" fill="#ccc" stroke="#ccc" /><path d="M1589 943h16M1589 949h16M1589 955h16" stroke="#ccc" stroke-width="2" /></svg>
          </div>
        </div>
      </div>

      <!-- app button -->
      <svg class="appbtn" viewBox="129 182 45 45" width="45" height="45">
        <defs><linearGradient id="ab" x1="0" y1="0" x2="0" y2="1"><stop offset="0" stop-color="#b4b4b4" /><stop offset=".5" stop-color="#8a8a8a" /><stop offset="1" stop-color="#a2a2a2" /></linearGradient></defs>
        <path d="M129.500 182.500h43.500v44h-43.500z" fill="url(#ab)" stroke="#3c3c3c" />
        <path d="M133.500 213l9.500-28h7l9.500 28h-6l-2-7h-9l-3 7z" fill="#c9252c" /><path d="M146.500 191l-3.500 11h7z" fill="#a0a0a0" /><path d="M136 209q6-7 15-7l3 6q-8-1-18 5z" fill="#e65a5e" />
        <path :d="dn(166.500, 204, .9)" fill="#2c3a44" />
      </svg>

      <!-- command line -->
      <div class="cmd">
        <svg viewBox="426 883 59 28" width="59" height="28"><path d="M431 888v18M434 888v18M437 888v18" stroke="#999" stroke-dasharray="1.500 1.500" /><path d="M443.500 892.500l9 9M452.500 892.500l-9 9" stroke="#ccc" stroke-width="2.200" /><path d="M471 895l8 8" stroke="#ccc" stroke-width="3.500" stroke-linecap="round" /><path d="M466 893q0 4 4 4t4-4-3-3l-1 3-2-1z" fill="#ccc" stroke="#ccc" /></svg>
        <div class="line">
          <svg viewBox="485 883 38 28" width="38" height="28"><rect x="491.500" y="889.500" width="15" height="14" fill="#a4a6ac" stroke="#6a6c74" /><path d="M494 893l4 3.500-4 3.500M500 901h5" stroke="#444a58" stroke-width="1.400" fill="none" /><path :d="dn(514, 896, .7)" fill="#555" /></svg>
          <span class="ph" v-fit="108">Type a command</span>
          <svg class="end" viewBox="1299 883 15 28" width="15" height="28"><path d="M1302 899l4-4.500 4 4.500z" fill="#111" /></svg>
        </div>
      </div>

      <!-- docked palettes -->
      <div class="palette left">
        <svg viewBox="129 367 23 64" width="23" height="64"><path d="M136.500 374.500l8 8M144.500 374.500l-8 8" stroke="#ccc" stroke-width="2.200" /><path d="M137 394v10M141 394.500h-4M141 403.500h-4M138 399h5" stroke="#bbb" stroke-width="1.500" fill="none" /><path d="M142 396l3 3-3 3z" fill="#ccc" /><circle cx="140.500" cy="420" r="3" fill="none" stroke="#ccc" stroke-width="1.800" /><circle cx="140.500" cy="420" r="5" fill="none" stroke="#ccc" stroke-width="2.200" stroke-dasharray="2 1.900" /></svg>
        <span class="vert v1"><i>RENDER PRESETS MANAGER</i></span>
        <svg viewBox="129 798 23 22" width="23" height="22"><path d="M133 807l5-1 2-2q5 0 5 3v5q0 2-3 2h-3q-2 0-3-3z" fill="#eee" /></svg>
      </div>
      <div class="palette rightp">
        <svg viewBox="1518 197 24 64" width="24" height="64"><path d="M1525.500 205l8 8M1533.500 205l-8 8" stroke="#bbb" stroke-width="2.200" /><path d="M1526 224v10M1530 224.500h-4M1530 233.500h-4M1527 229h5" stroke="#aaa" stroke-width="1.500" fill="none" /><path d="M1531 226l3 3-3 3z" fill="#bbb" /><circle cx="1529.500" cy="250" r="3" fill="none" stroke="#bbb" stroke-width="1.800" /><circle cx="1529.500" cy="250" r="5" fill="none" stroke="#bbb" stroke-width="2.200" stroke-dasharray="2 1.900" /></svg>
        <span class="vert v2"><i>MATERIALS BROWSER</i></span>
        <svg viewBox="1518 962 24 12" width="24" height="12"><path d="M1524 972q6-5 10 0M1527 974l6-3" stroke="#ccc" stroke-width="1.500" fill="none" /></svg>
      </div>

      <!-- context menu -->
      <div class="menu main">
        <div class="mi off"><span v-fit="190">Show Related Tool Palette Group</span></div>
        <div class="mi"><span v-fit="108">Tool Palette Group</span><svg class="sub" viewBox="0 0 6 10" width="6" height="10"><path d="M0 1v8l5-4z" fill="#fff" /></svg></div>
        <hr />
        <div class="mi hot"><span v-fit="63">Show Tabs</span><svg class="sub" viewBox="0 0 6 10" width="6" height="10"><path d="M0 1v8l5-4z" fill="#fff" /></svg></div>
        <div class="mi"><span v-fit="74">Show Panels</span><svg class="sub" viewBox="0 0 6 10" width="6" height="10"><path d="M0 1v8l5-4z" fill="#fff" /></svg></div>
        <hr />
        <div class="mi chk"><svg viewBox="0 0 12 12" width="12" height="12"><path d="M1 6l3 4.500L10 1" fill="none" stroke="#fff" stroke-width="2.300" /></svg><span v-fit="103">Show Panel Titles</span></div>
        <hr />
        <div class="mi"><span v-fit="46">Undock</span></div>
        <div class="mi"><span v-fit="31">Close</span></div>
      </div>
      <div class="menu tabsmenu">
        <div v-for="m in tabMenu" :key="m[0]" class="ti" :class="{ hot: m[0] === 'Visualize' }">
          <svg viewBox="0 0 12 12" width="12" height="12"><path v-if="m[1]" d="M1 6l3 4.500L10 1" fill="none" stroke="#fff" stroke-width="2.300" /></svg><span v-fit="m[2]">{{ m[0] }}</span>
        </div>
      </div>

      <!-- taskbar -->
      <div class="taskbar">
        <svg viewBox="118 974 720 43" width="720" height="43">
          <path d="M765 974h53v43h-53z" fill="#505257" />
          <path d="M338 1015h44v2h-44zM392 1015h43v2h-43zM446 1015h44v2h-44zM662 1015h44v2h-44zM716 1015h44v2h-44zM765 1015h53v2h-53z" fill="#76b9e0" />
          <path d="M135 988l7.500-1v8h-7.500zM144 987l9-1.300v9.300h-9zM135 996.500h7.500v8l-7.500-1zM144 996.500h9v9.300l-9-1.300z" fill="#fff" />
          <circle cx="199.500" cy="992.500" r="6" fill="none" stroke="#eee" stroke-width="1.500" /><path d="M195 997l-7 7" stroke="#eee" stroke-width="1.700" />
          <g fill="none" stroke="#eee" stroke-width="1.400"><path d="M241.500 990.500h11v9h-11zM241.500 986v2h11v-2M241.500 1004v-1.500h11v1.500M256.500 987v16" /></g><path d="M255 990.500h3v4h-3z" fill="#fff" />
          <circle cx="305.500" cy="996" r="12.500" fill="#1ed760" /><path d="M298 992q8-2.500 15 1.500M299 996.500q7-2 12.500 1.500M300 1001q6-1.500 10 1" fill="none" stroke="#152018" stroke-width="2.200" stroke-linecap="round" />
          <circle cx="360" cy="995.500" r="13.500" fill="#1566b8" /><path d="M347 993q3-11 14-11 12 1 12.500 11 0 6-7 6-5 0-4-4 0-6-7-6-5 0-8.500 4z" fill="#35c1b4" /><path d="M361 982q12 1 12.500 11 0 6-7 6-3 0-4-2 3-5-1-15z" fill="#5fd85a" /><path d="M354 993q-2 6 3 10 4 3 9 0-3 6-9 5-8-3-7-10 1-4 4-5z" fill="#0d4a90" /><path d="M358 994q2-3 4.500-1 1 1 0 4 3 4 10 2-3 4-8 3-7-2-6.500-8z" fill="#1f2024" />
          <path d="M402 986h9l2 2h12v17h-23z" fill="#f0b93a" /><path d="M402 990h23v15h-23z" fill="#fbd867" /><path d="M406 996h15v9h-4v-4h-7v4h-4z" fill="#3f95d8" />
          <circle cx="467.500" cy="995.500" r="12.500" fill="#f7c52a" /><path d="M467.500 995.500L457 989a12.500 12.500 0 0 1 21.500 0z" fill="#e33b2e" /><path d="M467.500 995.500L457 989a12.500 12.500 0 0 0 9 19z" fill="#2da94f" /><path d="M467.500 983c5 0 9 3 11 6.500h-11z" fill="#e33b2e" /><circle cx="467.500" cy="995.500" r="5.700" fill="#fff" /><circle cx="467.500" cy="995.500" r="4.500" fill="#4a8af0" />
          <ellipse cx="520.500" cy="997" rx="12" ry="9.500" transform="rotate(-25 520.500 997)" fill="#d4e6ee" /><circle cx="514" cy="994" r="2.200" fill="#e2693c" /><circle cx="520" cy="991" r="2.200" fill="#6bb84a" /><circle cx="527" cy="992" r="2.200" fill="#f0c83c" /><circle cx="518" cy="999" r="2.500" fill="#2c3038" /><path d="M530 987l-5 17" stroke="#c98d4a" stroke-width="2.500" /><path d="M527 984l6 1-1 5-4-1z" fill="#d8a070" />
          <circle cx="577" cy="995.500" r="12.500" fill="#e8704c" /><path d="M577 983a12.500 12.500 0 0 1 12.500 12.500H577z" fill="#f4916e" /><path d="M562 989h15v14h-15z" fill="#c23b1d" /><text x="565.500" y="1000.500" fill="#fff" font-weight="700" font-size="12.500">P</text>
          <path d="M622 983h21v25h-21z" fill="#2a6fd0" /><path d="M622 983h21v7h-21z" fill="#45a4ec" /><path d="M622 1001h21v7h-21z" fill="#174a96" /><path d="M616.500 989h14v14h-14z" fill="#1b4fa8" /><text x="617.500" y="1000" fill="#fff" font-weight="700" font-size="11.500">W</text>
          <path d="M671 983h25v26h-25z" fill="#fcd90c" /><path d="M683 996h13l-12 13h-1z" fill="#3a3a34" /><path d="M696 996v13h-12z" fill="#c9a20e" />
          <path d="M725 983h25v26h-25z" fill="#a81017" /><path d="M725 983h25v9h-25z" fill="#cc1c24" /><path d="M731 1002q8-8 6-14-3 2 0 7 3 5 9 3-3-3-15 4z" fill="none" stroke="#fff" stroke-width="1.500" />
          <path d="M778 982h26v27h-26z" fill="#f7e9e7" /><path d="M782 1006l6-21h6l7 20-5 .5-2-6-6 1-1.500 5.500zM789 995.500l3.500-.5-1.500-4z" fill="#b3212b" fill-rule="evenodd" />
        </svg>
        <div class="tray">
          <svg viewBox="1258 974 196 43" width="196" height="43">
            <path d="M1264.500 999l6-6 6 6" fill="none" stroke="#eee" stroke-width="1.500" />
            <path d="M1290 1001q-3-6 3-8 3-5 8-2 5 1 4 7l-3 4z" fill="#cfcfcf" /><circle cx="1301" cy="999" r="5" fill="#777" /><path d="M1299.500 996.500v5M1302.500 996.500v5" stroke="#ddd" stroke-width="1.300" />
            <path d="M1319 988l4 3-4 3-4-3zM1327.500 988l4 3-4 3-4-3zM1319 994.500l4 3-4 3-4-3zM1327.500 994.500l4 3-4 3-4-3zM1323.300 999l4 2.500-4 2.500-4-2.500z" fill="#fff" />
            <path d="M1343.500 991.500h14v8h-14z" fill="#2a7a3c" stroke="#eee" stroke-width="1.300" /><circle cx="1353.500" cy="1000" r="4.500" fill="#38a84a" /><path d="M1353.500 996.500v7M1351 999h5" stroke="#dfd" />
            <path d="M1368 993h3l4-4v14l-4-4h-3z" fill="none" stroke="#eee" stroke-width="1.200" /><path d="M1377.500 993q2 3 0 6M1380 991q3.500 5 0 10M1382.500 989q5 7 0 14" fill="none" stroke="#bbb" stroke-width="1.200" />
            <g fill="none" stroke="#ccc" stroke-width="1.300"><path d="M1398 1003q0-12 13-13M1401 1003q0-9 10-10M1404 1003q0-6 7-7M1407 1003q0-3 4-4" /></g><circle cx="1410" cy="1002" r="1.500" fill="#fff" />
            <path d="M1421.500 989.500h24v12h-24z" fill="none" stroke="#eee" stroke-width="1.300" /><path d="M1424 993h20M1424 996h20" stroke="#ddd" stroke-dasharray="1.500 1.200" /><path d="M1427 999h13" stroke="#ddd" />
          </svg>
          <span class="lang" v-fit="26">ENG</span>
          <div class="clock"><span v-fit="31">21:49</span><span v-fit="60">04.09.2020</span></div>
          <svg viewBox="1566 974 57 43" width="57" height="43"><path d="M1577.500 988.500h17v14h-5l-3.500 3.500-3.500-3.500h-5z" fill="none" stroke="#eee" stroke-width="1.400" /><path d="M1617.500 974v43" stroke="#777" /></svg>
        </div>
      </div>
    </div>

    <div class="foot">
      <div class="fl">
        <div><span v-fit="497">ΕΙΔΙΚΑ ΘΕΜΑΤΑ ΠΛΗΡΟΦΟΡΙΚΗΣ 5<sup>ου</sup> ΕΞΑΜΗΝΟΥ</span></div>
        <div><span v-fit="434">ΤΟ ΨΗΦΙΑΚΟ ΓΡΑΦΕΙΟ ΤΟΥ ΑΡΧΙΤΕΚΤΟΝΑ</span></div>
        <div><span v-fit="329">ΑΚΑΔΗΜΑΪΚΟ ΕΤΟΣ 2019 – 2020</span></div>
      </div>
      <div class="fr">
        <div><span v-fit="467">ΣΠΟΥΔΑΣΤΡΙΑ: IOSIFIDI ELIZAVETA (ar17731)</span></div>
        <div><span v-fit="356">ΔΙΔΑΣΚΟΝΤΕΣ: ΒΕΝΕΡΗΣ ΙΩΑΝΝΗΣ</span></div>
        <div><span v-fit="163">ΛΑΣΚΑΡΗ ΑΝΝΑ</span></div>
      </div>
    </div>
  </div>
</template>

<style>
body { margin: 0; background: #fff; }
</style>

<style scoped>
* { box-sizing: border-box; }
svg { display: block; flex: none; }
span, b, i { white-space: nowrap; }
.page { width: 1754px; height: 1241px; overflow: hidden; background: #fff; color: #000; font-family: "DejaVu Serif Condensed", "DejaVu Serif", serif; font-stretch: condensed; padding: 74px 129px 0 118px; display: flex; flex-direction: column; }
h1 { margin: 0 0 0 -8px; height: 31px; line-height: 31px; font-size: 22px; display: flex; }
h1 .num { width: 38px; }
.lead { margin: 17px 0 0; height: 31px; line-height: 31px; font-size: 21.5px; }
.lead span, h1 span { display: inline-block; }
.shot { position: relative; width: 1505px; height: 847px; margin-top: 17px; display: flex; flex-direction: column; font-family: "Noto Sans", "Open Sans", sans-serif; font-size: 12.5px; font-stretch: normal; }
.shot span, .shot b { display: inline-block; font-weight: 400; }
.desk { position: absolute; left: 0; top: 0; }
.window { position: relative; width: 1484px; height: 793px; margin: 3px 0 0 10px; border: 1px solid #c9cdc2; display: flex; flex-direction: column; background: #3a3a3a; }
.titlebar { height: 35px; background: #fff; display: flex; align-items: flex-end; flex: none; padding-bottom: 1px; }
.quick { margin-left: 45px; background: linear-gradient(#8e8e8e, #686868); height: 26px; width: 236px; }
.caption { margin: 0 137px 0 135px; width: 257px; height: 26px; line-height: 17px; display: flex; font-size: 12.8px; color: #222; }
.file { margin-left: 19px; }
.info { height: 26px; width: 492px; background: linear-gradient(#909090, #666); display: flex; align-items: center; color: #f2f2f2; }
.search { width: 198px; height: 24px; line-height: 23px; background: #727272; border: 1px solid #444; padding-left: 4px; font-style: italic; color: #c4c4c4; font-size: 12px; }
.signin { width: 87px; padding-left: 4px; }
.wbtn { margin-left: 39px; height: 34px; }
.tabs { height: 22px; flex: none; background: #505050; border-top: 1px solid #3a3a3a; padding-left: 51px; display: flex; align-items: flex-end; color: #d0d0d0; }
.tab { height: 19px; line-height: 17px; }
.tab.active { margin: 0 -9px 0 0 !important; padding: 0 8px; width: 55px; background: #666; border: 1px solid #3c3c3c; border-bottom: 0; line-height: 16px; color: #f0f0f0; }
.ribbon { height: 112px; flex: none; background: #4b4b4b; border-top: 1px solid #404040; border-bottom: 3px solid #8a8a8a; padding-left: 2px; display: flex; color: #e4e4e4; }
.panel { height: 108px; background: #5a5a5a; border-right: 2px solid #484848; display: flex; flex-direction: column; flex: none; }
.tools { height: 88px; padding-top: 5px; display: flex; align-items: flex-start; }
.tool { display: flex; flex-direction: column; align-items: center; }
.tool b { line-height: 17px; height: 17px; position: relative; top: .5px; }
.tool b + svg { margin-top: 2px; }
.panel footer { height: 20px; background: linear-gradient(#484848, #545454); display: flex; justify-content: center; align-items: center; gap: 4px; line-height: 18px; padding-bottom: 2px; }
.panel footer.right { justify-content: flex-end; padding-right: 3px; }
.node { fill: #dbe6f8; stroke: #4c7fc8; stroke-width: 1; }
.layers { display: flex; flex-direction: column; gap: 1px; }
.combo { width: 229px; height: 25px; border: 1px solid #3a3a3a; background: linear-gradient(#686868, #4f4f4f); display: flex; align-items: center; color: #eee; }
.combo span { margin-left: 4px; }
.end { margin-left: auto; }
.solo { width: 65px; height: 106px; margin-right: 2px; background: linear-gradient(#626262, #4c4c4c); border: 1px solid #3f3f3f; display: flex; flex-direction: column; align-items: center; padding-top: 2px; flex: none; }
.solo b { line-height: 17px; margin-top: -1px; }
.solo:nth-of-type(7) { margin-left: 1px; }
.dnb { margin-top: 34px; }
.canvas { background: #000; flex: none; }
.vp { font-size: 12.5px; fill: #e4e4e4; }
.bottom { height: 54px; display: flex; flex-direction: column; background: #3a3a3a; border-top: 1px solid #555; }
.status { display: flex; margin-left: 645px; height: 30px; background: #484848; }
.status svg { box-shadow: inset -1px 1px #7d7d7d; }
.status svg:first-child { box-shadow: inset -1px 1px #7d7d7d, inset 1px 0 #7d7d7d; }
.st { font-size: 13px; fill: #f0f0f0; font-weight: 500; }
.appbtn { position: absolute; left: 11px; top: 12px; }
.cmd { position: absolute; left: 308px; top: 713px; width: 888px; height: 28px; display: flex; }
.cmd > svg { background: #474747; }
.line { flex: 1; background: rgba(192, 192, 192, .93); display: flex; align-items: center; }
.ph { font-family: "DejaVu Sans Mono", monospace; font-style: italic; font-size: 12.5px; color: #6c6c6c; margin-left: 3px; padding-bottom: 2px; }
.palette { position: absolute; background: #545454; display: flex; flex-direction: column; align-items: center; border-radius: 3px; box-shadow: inset 1px 0 #464646, inset -1px 0 #464646; }
.left { left: 11px; top: 197px; width: 23px; height: 453px; }
.rightp { left: 1400px; top: 27px; width: 24px; height: 777px; border-radius: 3px 3px 0 0; }
.vert { writing-mode: vertical-rl; transform: rotate(180deg); color: #c0c0c0; font-size: 12.5px; line-height: 22px; }
.vert i { font-style: normal; }
.v1 { margin-top: auto; margin-bottom: 10px; height: 167px; letter-spacing: .03px; }
.v2 { margin-top: auto; margin-bottom: 4px; height: 128px; letter-spacing: .03px; }
.menu { position: absolute; background: #525252; border: 1px solid #8a8a8a; color: #f6f6f6; }
.menu span { font-weight: 500; }
.main { left: 940px; top: 47px; width: 240px; height: 205px; }
.mi { height: 26.4px; line-height: 25px; padding-left: 22px; display: flex; align-items: center; }
.mi.off { color: #a6a6a6; }
.main hr { margin: 2.5px 0 2.6px; border: 0; border-top: 1px solid #909090; height: 0; }
.mi.hot, .ti.hot { background: linear-gradient(#6c6c6c, #565656); outline: 1px solid #3d3d3d; outline-offset: -1px; }
.sub { margin-left: auto; margin-right: 4px; }
.mi.chk { padding-left: 7px; }
.mi.chk svg { margin-right: 3px; }
.tabsmenu { left: 816px; top: 108px; width: 133px; height: 400px; padding: 0 1px; }
.ti { height: 26.43px; display: flex; align-items: center; padding-left: 5px; }
.ti span { margin-left: 4px; }
.taskbar { margin-top: 8px; height: 43px; background: linear-gradient(90deg, #1e1f23, #25262c 60%, #25272f); display: flex; justify-content: space-between; position: relative; color: #f0f0f0; }
.tray { display: flex; align-items: center; }
.lang { margin: 0 7px 0 4px; }
.clock { width: 72px; margin-right: 3px; display: flex; flex-direction: column; align-items: center; line-height: 20px; font-size: 12.3px; padding-bottom: 1px; }
.foot { display: flex; justify-content: space-between; width: 1507px; margin-top: 63px; font-size: 20.5px; line-height: 26.5px; color: #7f7f7f; }
.foot span { display: inline-block; }
.fr { text-align: right; }
sup { font-size: 13px; line-height: 0; }
</style>
